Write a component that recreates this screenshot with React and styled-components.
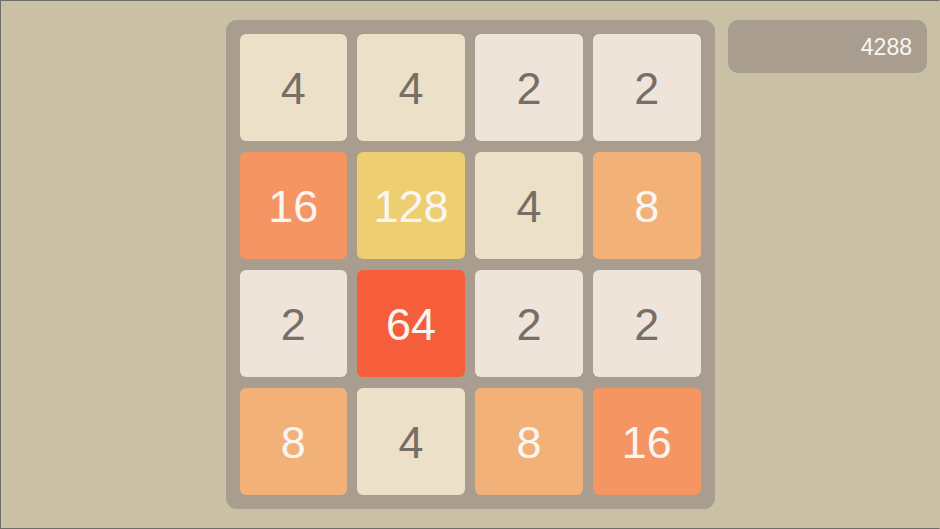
import React from "react";
import styled, { createGlobalStyle } from "styled-components";

const GlobalStyle = createGlobalStyle`
  html, body {
    margin: 0;
    padding: 0;
    background: #c9c0a6;
  }
  * {
    box-sizing: border-box;
  }
`;

const TILE_COLORS = {
  2: { bg: "#eee4da", fg: "#776e65" },
  4: { bg: "#ede0c8", fg: "#776e65" },
  8: { bg: "#f2b179", fg: "#f9f6f2" },
  16: { bg: "#f59563", fg: "#f9f6f2" },
  32: { bg: "#f67c5f", fg: "#f9f6f2" },
  64: { bg: "#f65e3b", fg: "#f9f6f2" },
  128: { bg: "#edcf72", fg: "#f9f6f2" },
};

const grid = [
  [4, 4, 2, 2],
  [16, 128, 4, 8],
  [2, 64, 2, 2],
  [8, 4, 8, 16],
];

const Page = styled.div`
  width: 940px;
  height: 529px;
  border: 1px solid #6e6e68;
  border-right-color: #c9c0a6;
  display: grid;
  grid-template-columns: 1fr auto 1fr;
  align-items: start;
  padding-top: 19px;
  font-family: "Liberation Sans", Arial, sans-serif;
`;

const Board = styled.div`
  width: 489px;
  height: 489px;
  background: #a89d8f;
  border-radius: 11px;
  padding: 14px;
  display: grid;
  grid-template-columns: repeat(4, 1fr);
  grid-template-rows: repeat(4, 1fr);
  gap: 10.5px;
`;

const Tile = styled.div`
  background: ${(p) => p.$bg};
  color: ${(p) => p.$fg};
  border-radius: 6px;
  display: flex;
  align-items: center;
  justify-content: center;
  padding-top: 3px;
  font-size: 45px;
  font-weight: 400;
`;

const Side = styled.div`
  padding: 0 12px 0 13px;
`;

const ScoreBox = styled.div`
  height: 53px;
  background: #a89d8f;
  border-radius: 10px;
  display: flex;
  align-items: center;
  justify-content: flex-end;
  padding: 1px 15px 0 0;
  color: #f9f6f2;
  font-size: 23px;
`;

export default function App() {
  return (
    <>
      <GlobalStyle />
      <Page>
        <div />
        <Board>
          {grid.flat().map((v, i) => (
            <Tile key={i} $bg={TILE_COLORS[v].bg} $fg={TILE_COLORS[v].fg}>
              {v}
            </Tile>
          ))}
        </Board>
        <Side>
          <ScoreBox>4288</ScoreBox>
        </Side>
      </Page>
    </>
  );
}
